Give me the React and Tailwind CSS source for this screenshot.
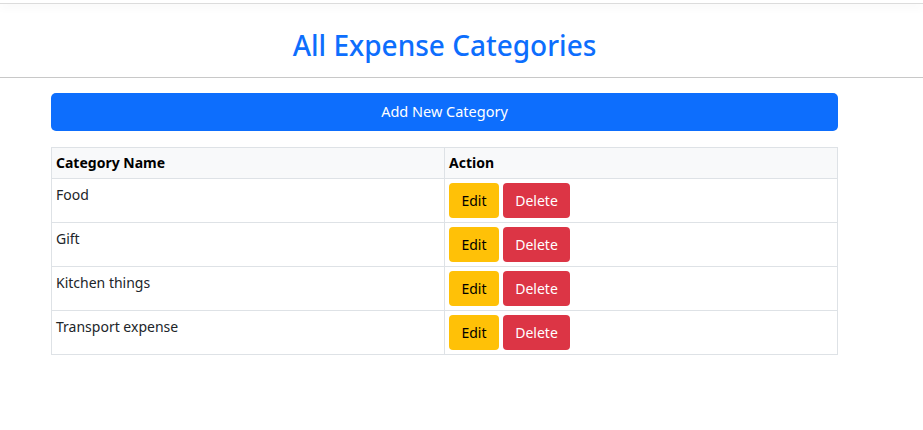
export default function App() {
  const rows = ["Food", "Gift", "Kitchen things", "Transport expense"];
  return (
    <div className="min-h-[430px] bg-white text-[#212529]" style={{ fontFamily: '"Noto Sans", "Liberation Sans", sans-serif' }}>
      <div className="h-[4px] border-b border-[#dcdcdc] bg-white shadow-[0_3px_10px_rgba(0,0,0,0.05)]"></div>
      <div className="border-b border-[#c8c8c8]">
        <div className="mx-[51px] w-[787px] pt-[25px] pb-[15px] text-center">
          <h2 className="text-[28px] font-medium leading-[33px] text-[#0d6efd]">All Expense Categories</h2>
        </div>
      </div>
      <div className="mx-[51px] w-[787px] pt-[15px]">
        <button className="h-[38px] w-full rounded-[5px] bg-[#0d6efd] text-[14.5px] text-white">Add New Category</button>
        <table className="mt-[16px] w-full border-collapse border border-[#dee2e6] text-[14px]">
          <thead>
            <tr className="bg-[#f8f9fa]">
              <th className="w-1/2 border border-[#dee2e6] px-[4px] py-[4px] text-left text-[14px] font-bold leading-[22px] text-black">Category Name</th>
              <th className="border border-[#dee2e6] px-[4px] py-[4px] text-left text-[14px] font-bold leading-[22px] text-black">Action</th>
            </tr>
          </thead>
          <tbody>
            {rows.map((r) => (
              <tr key={r}>
                <td className="border border-[#dee2e6] px-[4px] py-[4px] align-top leading-[24px]">{r}</td>
                <td className="border border-[#dee2e6] px-[4px] py-[4px] align-top">
                  <div className="flex gap-[4px]">
                    <button className="h-[35px] w-[50px] rounded-[4px] bg-[#ffc107] text-[14px] text-black">Edit</button>
                    <button className="h-[35px] w-[67px] rounded-[4px] bg-[#dc3545] text-[14px] text-white">Delete</button>
                  </div>
                </td>
              </tr>
            ))}
          </tbody>
        </table>
      </div>
    </div>
  );
}
